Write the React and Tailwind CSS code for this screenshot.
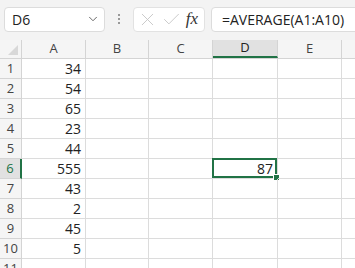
import { ChevronDown, X, Check } from 'lucide-react';

const cols = ['A', 'B', 'C', 'D', 'E', 'F'];
const widths = ['w-[64px]', 'w-[63px]', 'w-[64px]', 'w-[65px]', 'w-[64px]', 'w-[64px]'];
const values = [34, 54, 65, 23, 44, 555, 43, 2, 45, 5, ''];
const font = { fontFamily: '"Open Sans", "Noto Sans", sans-serif' };

export default function App() {
    return (
        <div className="w-[355px] h-[268px] overflow-hidden bg-white text-[#222]" style={font}>
            <div className="h-[38px] bg-[#f3f3f3] flex items-center pl-[4px] gap-[6px]">
                <div className="w-[101px] h-[25px] shrink-0 bg-white border border-[#dcdcdc] rounded-[4px] flex items-center justify-between pl-[7px] pr-[4px]">
                    <span className="text-[14px]">D6</span>
                    <ChevronDown size={14} strokeWidth={1.5} className="text-[#555]" />
                </div>
                <div className="w-[16px] flex flex-col items-center gap-[2px]">
                    <span className="w-[2px] h-[2px] bg-[#999]" />
                    <span className="w-[2px] h-[2px] bg-[#999]" />
                    <span className="w-[2px] h-[2px] bg-[#999]" />
                </div>
                <div className="w-[72px] h-[25px] shrink-0 bg-white border border-[#e2e2e2] rounded-[4px] flex items-center justify-between pl-[3px] pr-[6px]">
                    <X size={21} strokeWidth={1} className="text-[#c4c4c4]" />
                    <Check size={21} strokeWidth={1} className="text-[#c4c4c4]" />
                    <span className="text-[17px] italic text-[#333]" style={{ fontFamily: '"Liberation Serif", serif' }}>fx</span>
                </div>
                <div className="flex-1 h-[25px] -mr-[8px] bg-white border border-[#dcdcdc] rounded-[4px] flex items-center pl-[10px]">
                    <span className="text-[14px]">=AVERAGE(A1:A10)</span>
                </div>
            </div>
            <div className="h-[2px] bg-[#f3f3f3]" />
            <div className="flex h-[19px] bg-[#f5f5f5] border-b border-[#d4d4d4]">
                <div className="w-[22px] shrink-0 border-r border-[#d4d4d4] relative overflow-hidden">
                    <div className="absolute right-[3px] bottom-[3px] w-0 h-0 border-l-[10px] border-l-transparent border-b-[10px] border-b-[#d8d8d8]" />
                </div>
                {cols.map((c, i) => (
                    <div
                        key={c}
                        className={`${widths[i]} shrink-0 border-r border-[#d4d4d4] flex items-center justify-center text-[13px] ${c === 'D' ? 'bg-[#e1e1e1] border-b-2 border-b-[#217346] text-[#222]' : 'text-[#444]'}`}
                    >
                        {c}
                    </div>
                ))}
            </div>
            {values.map((v, r) => {
                const sel = r === 5;
                return (
                    <div key={r} className="flex h-[20px]">
                        <div
                            className={`w-[22px] shrink-0 border-b border-[#d4d4d4] flex items-center justify-center text-[13px] ${sel ? 'bg-[#e1e1e1] border-r-2 border-r-[#217346] text-[#217346]' : 'bg-[#f5f5f5] border-r border-[#d4d4d4] text-[#444]'}`}
                        >
                            {r + 1}
                        </div>
                        {cols.map((c, i) => (
                            <div
                                key={c}
                                className={`${widths[i]} shrink-0 border-r border-b border-[#dcdcdc] relative flex items-center justify-end pr-[4px] text-[14px]`}
                            >
                                {c === 'A' ? v : ''}
                                {c === 'D' && sel && (
                                    <>
                                        <div className="absolute -left-[1px] -top-[1px] right-0 bottom-0 border-2 border-[#217346]" />
                                        <span className="relative">87</span>
                                        <div className="absolute -right-[3px] -bottom-[3px] w-[7px] h-[7px] bg-[#217346] border border-white" />
                                    </>
                                )}
                            </div>
                        ))}
                    </div>
                );
            })}
        </div>
    );
}
